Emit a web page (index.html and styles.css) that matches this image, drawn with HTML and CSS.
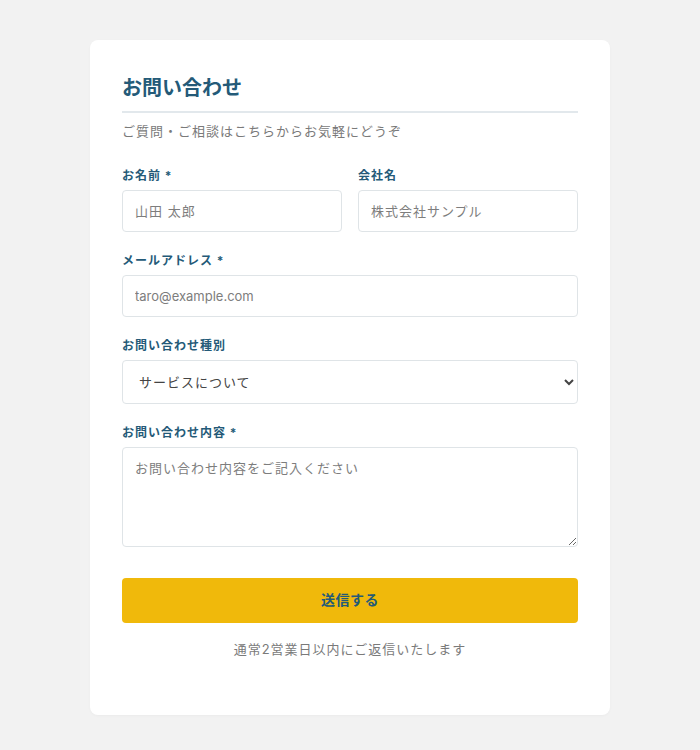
FILE: index.html
```html
<!DOCTYPE html>
<html lang="ja">
<head>
<meta charset="utf-8">
<title>お問い合わせ</title>
<link rel="stylesheet" href="styles.css">
</head>
<body>
<div class="card">
  <h1 class="title">お問い合わせ</h1>
  <p class="subtitle">ご質問・ご相談はこちらからお気軽にどうぞ</p>
  <form class="form">
    <div class="row">
      <div class="group">
        <label class="label">お名前 *</label>
        <input class="input" type="text" placeholder="山田 太郎">
      </div>
      <div class="group">
        <label class="label">会社名</label>
        <input class="input" type="text" placeholder="株式会社サンプル">
      </div>
    </div>
    <div class="group">
      <label class="label">メールアドレス *</label>
      <input class="input" type="email" placeholder="taro@example.com">
    </div>
    <div class="group">
      <label class="label">お問い合わせ種別</label>
      <select class="select">
        <option>サービスについて</option>
      </select>
    </div>
    <div class="group">
      <label class="label">お問い合わせ内容 *</label>
      <textarea class="textarea" placeholder="お問い合わせ内容をご記入ください"></textarea>
    </div>
    <button class="button" type="button">送信する</button>
    <p class="note">通常2営業日以内にご返信いたします</p>
  </form>
</div>
</body>
</html>
```

FILE: styles.css
```css
* { box-sizing: border-box; }
html, body { margin: 0; }
body {
  background: #f2f2f2;
  padding: 40px 0;
  font-family: "Inter", "Noto Sans CJK JP", sans-serif;
}
.card {
  width: 520px;
  margin: 0 auto;
  background: #ffffff;
  border-radius: 8px;
  padding: 32px 32px 55px;
  box-shadow: 0 1px 3px rgba(0,0,0,0.03);
}
.title {
  margin: 0;
  font-size: 20px;
  line-height: 30px;
  font-weight: 700;
  color: #245a78;
  padding-top: 1px;
  padding-bottom: 8px;
  border-bottom: 2px solid #e2e8ec;
}
.subtitle {
  margin: 8px 0 0;
  font-size: 13px;
  letter-spacing: 1px;
  line-height: 21px;
  color: #7a7a7a;
}
.form {
  margin-top: 24px;
  display: flex;
  flex-direction: column;
}
.row {
  display: flex;
  gap: 16px;
}
.row .group { flex: 1; min-width: 0; }
.group {
  display: flex;
  flex-direction: column;
  margin-bottom: 19px;
}
.label {
  font-size: 12px;
  letter-spacing: 1px;
  line-height: 18px;
  font-weight: 700;
  color: #245a78;
  margin-top: 1px;
  margin-bottom: 5px;
}
.input, .select, .textarea {
  display: block;
  width: 100%;
  border: 1px solid #dfe4e7;
  border-radius: 4px;
  background: #fff;
  font-family: inherit;
  font-size: 13px;
  letter-spacing: 1px;
  color: #333;
}
.input {
  height: 42px;
  padding: 0 12px;
}
.input::placeholder, .textarea::placeholder { color: #7d7d7d; }
.input[type="email"] { letter-spacing: 0; }
.input[type="email"]::placeholder { letter-spacing: 0; }
.select {
  height: 44px;
  padding: 0 12px;
  color: #444;
}
.textarea {
  height: 100px;
  padding: 10px 12px;
  line-height: 20px;
  resize: vertical;
}
.button {
  margin-top: 12px;
  height: 45px;
  padding: 0 0 2px;
  border: none;
  border-radius: 4px;
  background: #f0b90b;
  color: #245a78;
  font-family: inherit;
  font-size: 14px;
  line-height: 20px;
  font-weight: 700;
  letter-spacing: 0.5px;
}
.note {
  margin: 16px 0 0;
  text-align: center;
  font-size: 13px;
  letter-spacing: 1px;
  line-height: 21px;
  color: #7a7a7a;
}
```
